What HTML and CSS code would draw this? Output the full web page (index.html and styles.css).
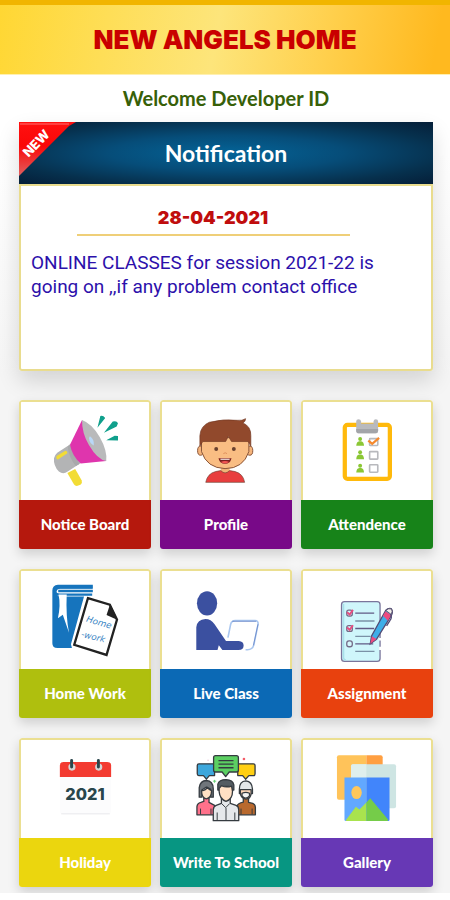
FILE: index.html
```html
<!DOCTYPE html>
<html lang="en">
<head>
    <meta charset="UTF-8">
    <meta name="viewport" content="width=device-width, initial-scale=1.0">
    <title>New Angels Home</title>
    <link rel="stylesheet" href="styles.css">
</head>
<body>
    <header class="app-header">
        <h1>NEW ANGELS HOME</h1>
    </header>

    <main class="content">
        <p class="welcome">Welcome Developer ID</p>

        <section class="notification">
            <div class="notification-header">
                <svg class="ribbon" viewBox="0 0 58 54" aria-hidden="true">
                    <defs>
                        <linearGradient id="ribbonRed" x1="0" y1="0" x2="0" y2="1">
                            <stop offset="0" stop-color="#ff1010"/>
                            <stop offset="0.45" stop-color="#fa0808"/>
                            <stop offset="1" stop-color="#e06060"/>
                        </linearGradient>
                    </defs>
                    <path d="M0 0H57L50 4L0 54Z" fill="url(#ribbonRed)"/>
                    <path d="M1 2H50" stroke="#ff7070"/>
                    <text x="17" y="26" transform="rotate(-46 17 21)" text-anchor="middle" class="ribbon-text">NEW</text>
                </svg>
                <h2>Notification</h2>
            </div>
            <div class="notification-body">
                <p class="date">28-04-2021</p>
                <p class="message">ONLINE CLASSES for session 2021-22 is going on ,,if any problem contact office</p>
            </div>
        </section>

        <nav class="menu">
            <a class="tile notice" href="#notice">
                <svg viewBox="28 18 392 296" aria-hidden="true">
                    <path d="M170 233L194 221L214 256Q217 264 210 269L199 273Q193 273 190 268Z" fill="#f2dc35"/>
                    <path d="M178 146L211 203L171 229Q157 239 144 229Q127 211 129 188Q131 178 139 171Z" fill="#b3b4b5"/>
                    <path d="M178 146L194 181L207 206L196 212Q175 187 171 152Z" fill="#a8a9ab"/>
                    <path d="M137 181L164 165Q170 164 170 173L141 192Q134 191 137 181Z" fill="#f2dc35"/>
                    <path d="M215 71L289 197L211 204Q185 183 178 147Z" fill="#df35ad"/>
                    <path d="M215 71Q245 82 269 123Q293 165 289 197Q262 193 236 148Q214 110 215 71Z" fill="#b9babb"/>
                    <path d="M239 121Q253 130 251 149Q238 143 236 126Z" fill="#b9d8f8"/>
                    <path d="M262 95L271 59Q279 56 286 65ZM282 110L309 76Q321 72 325 81L321 91ZM289 133L315 119L325 120L325 134Z" fill="#10a08c"/>
                </svg>
                <span class="label">Notice Board</span>
            </a>
            <a class="tile profile" href="#profile">
                <svg viewBox="15 18 392 296" aria-hidden="true">
                    <path d="M195 210H222V238H195Z" fill="#f1b478"/>
                    <path d="M149 262Q154 235 179 229L195 226Q208 240 222 226L239 229Q264 236 268 262Z" fill="#e83e3e" stroke="#704132" stroke-width="2"/>
                    <ellipse cx="133" cy="165" rx="9" ry="14" fill="#f5b47b" stroke="#875338" stroke-width="3"/>
                    <ellipse cx="284" cy="165" rx="9" ry="14" fill="#f5b47b" stroke="#875338" stroke-width="3"/>
                    <path d="M136 125H281V168Q264 220 208 220Q152 218 136 168Z" fill="#f9bd83" stroke="#875338" stroke-width="3"/>
                    <path d="M131 151V119Q133 89 160 78Q203 67 246 72Q260 74 271 67Q271 76 263 80Q288 91 287 119V151L279 137H228L218 121L210 137H140Z" fill="#91492c" stroke="#713722" stroke-width="2"/>
                    <circle cx="181" cy="160" r="6" fill="#69412f"/>
                    <circle cx="235" cy="160" r="6" fill="#69412f"/>
                    <path d="M203 174Q209 169 214 174" fill="none" stroke="#dc8e5c" stroke-width="3"/>
                    <path d="M188 188H228Q224 205 208 205Q192 205 188 188Z" fill="#7c2020"/>
                    <path d="M194 190H222V193H194Z" fill="#fff"/>
                    <path d="M195 200Q208 193 221 200Q208 208 195 200Z" fill="#f35553"/>
                </svg>
                <span class="label">Profile</span>
            </a>
            <a class="tile attendance" href="#attendance">
                <svg viewBox="19 18 392 296" aria-hidden="true">
                    <rect x="147" y="86" width="138" height="165" rx="8" fill="#fff" stroke="#ffb90b" stroke-width="13"/>
                    <path d="M182 75Q182 69 189 69Q196 69 197 75V82H235V75Q236 69 242 69Q249 69 249 75V103Q249 112 241 112H191Q182 112 182 103Z" fill="#b9babd"/>
                    <path d="M182 99H249V104Q248 112 241 112H191Q182 112 182 104Z" fill="#a3a5a9"/>
                    <g fill="#8bc735">
                        <circle cx="194" cy="129" r="6"/><path d="M182 150Q183 137 191 136H197Q205 137 206 150Z"/>
                        <circle cx="194" cy="170" r="6"/><path d="M182 191Q183 178 191 177H197Q205 178 206 191Z"/>
                        <circle cx="194" cy="211" r="6"/><path d="M182 232Q183 219 191 218H197Q205 219 206 232Z"/>
                    </g>
                    <g fill="none" stroke="#b8b9bd" stroke-width="5">
                        <rect x="223" y="128" width="25" height="21" rx="2"/>
                        <rect x="223" y="168" width="25" height="23" rx="2"/>
                        <rect x="223" y="208" width="25" height="23" rx="2"/>
                    </g>
                    <path d="M219 134L231 144L252 126" fill="none" stroke="#f5892c" stroke-width="7"/>
                </svg>
                <span class="label">Attendence</span>
            </a>
            <a class="tile homework" href="#homework">
                <svg viewBox="28 18 392 296" aria-hidden="true">
                    <path d="M248 58H141Q124 59 124 76V237Q124 252 140 252H184L181 240L221 94H145Q134 89 137 77Q139 70 148 70H248Z" fill="#1674bd"/>
                    <path d="M246 66H143Q133 67 132 77Q132 88 146 88H246" fill="none" stroke="#1674bd" stroke-width="7"/>
                    <path d="M142 77H248" stroke="#1674bd" stroke-width="8"/>
                    <path d="M143 88H168Q165 155 175 205L156 150L141 161Q150 120 143 88Z" fill="#fff"/>
                    <path d="M230 94L302 115L327 161L293 279L186 245Z" fill="#fff"/>
                    <path d="M233 99L300 119L322 165L290 273L191 242Z" fill="#fff" stroke="#222" stroke-width="7"/>
                    <path d="M301 117L290 151L324 166Z" fill="#222"/>
                    <text x="226" y="171" transform="rotate(16 226 171)" class="handwriting">Home</text>
                    <text x="211" y="217" transform="rotate(14 211 217)" class="handwriting">-work</text>
                </svg>
                <span class="label">Home Work</span>
            </a>
            <a class="tile live" href="#live">
                <svg viewBox="15 18 392 296" aria-hidden="true">
                    <ellipse cx="153" cy="115" rx="31" ry="37" fill="#3b50a0"/>
                    <path d="M120 258V188Q123 164 148 163Q165 163 176 179L211 230H250Q265 231 265 244Q265 258 249 258H200L189 243L185 258Z" fill="#3b50a0"/>
                    <path d="M217 220L225 180Q228 168 239 168H300Q311 168 309 180L296 243Q292 257 277 257H271" fill="none" stroke="#a9c6ef" stroke-width="5"/>
                    <path d="M230 170H303M309 179L295 244" fill="none" stroke="#5674bd" stroke-width="2"/>
                </svg>
                <span class="label">Live Class</span>
            </a>
            <a class="tile assignment" href="#assignment">
                <svg viewBox="19 18 392 296" aria-hidden="true">
                    <rect x="137" y="110" width="118" height="183" rx="9" fill="#cff6fb" stroke="#7a759b" stroke-width="4"/>
                    <path d="M143 117V282Q144 288 150 289" fill="none" stroke="#a8e0ea" stroke-width="5"/>
                    <path d="M179 145H237M179 192H237M179 239H234" stroke="#625b85" stroke-width="4"/>
                    <path d="M179 169H238M179 216H226M179 262H238" stroke="#7a91a6" stroke-width="4"/>
                    <g fill="#d4f7fb" stroke="#746b87" stroke-width="4">
                        <rect x="153" y="136" width="17" height="18" rx="6"/>
                        <rect x="153" y="183" width="17" height="18" rx="6"/>
                        <rect x="153" y="230" width="17" height="18" rx="7"/>
                    </g>
                    <path d="M154 142L162 149L172 135M154 189L162 196L172 182" fill="none" stroke="#e74d80" stroke-width="6"/>
                    <path d="M255 221V229M255 248V258" stroke="#fff" stroke-width="6"/>
                    <path d="M225 239L229 215L272 137Q280 128 289 131Q296 139 290 151L244 225Z" fill="#3eaee8" stroke="#514b75" stroke-width="4"/>
                    <path d="M264 153L272 139L289 151L279 168ZM225 239L230 216L244 224Z" fill="#ed4b80"/>
                    <path d="M273 137Q280 129 289 132Q295 138 289 149Z" fill="#f2f0ec" stroke="#655c76" stroke-width="3"/>
                    <path d="M287 148Q293 158 285 168L275 184" fill="none" stroke="#514b75" stroke-width="4"/>
                </svg>
                <span class="label">Assignment</span>
            </a>
            <a class="tile holiday" href="#holiday">
                <svg viewBox="28 18 392 296" aria-hidden="true">
                    <path d="M148 128H303V236Q303 244 295 244H156Q148 244 148 236Z" fill="#fcfcfd"/>
                    <path d="M151 242H300" stroke="#e9eaec" stroke-width="3"/>
                    <path d="M147 129V94Q147 83 158 83H292Q304 83 304 94V129Z" fill="#f33b31"/>
                    <circle cx="184" cy="99" r="11" fill="#d4d5d5"/>
                    <circle cx="266" cy="99" r="11" fill="#d4d5d5"/>
                    <path d="M183 79V99M265 79V99" stroke="#29464c" stroke-width="9" stroke-linecap="round"/>
                    <text x="224" y="199" text-anchor="middle" class="year">2021</text>
                </svg>
                <span class="label">Holiday</span>
            </a>
            <a class="tile write" href="#write">
                <svg viewBox="15 18 392 296" aria-hidden="true">
                    <g stroke="#353b40" stroke-width="4" stroke-linejoin="round">
                        <path d="M128 89H176V125H160L151 136L142 125H128Q123 124 123 119V94Q123 89 128 89Z" fill="#3da7dc"/>
                        <path d="M247 89H295Q300 89 300 94V119Q300 125 295 125H281L271 136L262 125H247Z" fill="#ffcf13"/>
                        <path d="M179 64H243Q249 64 249 70V108Q249 114 243 114H221L210 128L199 114H179Q173 114 173 108V70Q173 64 179 64Z" fill="#5bcf62"/>
                        <path d="M188 79H234M188 90H234M188 101H234" fill="none"/>
                        <path d="M143 190H159V207L176 216V245H122V220Q123 210 134 207L143 204Z" fill="#ff718b"/>
                        <path d="M129 191V162Q132 140 151 140Q171 141 172 165V191H164V166L151 160L137 169V191Z" fill="#70767b"/>
                        <path d="M136 172Q150 169 154 161Q160 170 167 171Q166 194 151 196Q137 194 136 172Z" fill="#ffe0c4"/>
                        <path d="M264 192H280V207L293 210Q301 213 301 222V245H246V216Q247 210 264 206Z" fill="#b9692e"/>
                        <path d="M252 166Q252 142 272 141Q291 143 292 166V180H252Z" fill="#e3e7e9"/>
                        <path d="M255 168H288V180Q286 196 272 197Q257 194 255 180Z" fill="#ffd9ba"/>
                        <path d="M260 179Q272 174 283 179V187Q271 201 260 187Z" fill="#f3f4f4"/>
                        <path d="M197 191H224V210L242 216Q250 219 250 230V263H172V229Q173 219 181 216L197 210Z" fill="#e5e8eb"/>
                        <path d="M186 169V151Q190 137 211 137Q232 138 235 153V169H227L220 158H197L193 169Z" fill="#545c62"/>
                        <path d="M190 164L197 156Q212 163 228 157L231 173Q231 198 211 204Q192 197 190 174Z" fill="#ffe0c4"/>
                        <path d="M198 211L210 223L222 211M211 224V262M184 238V262M238 238V262M133 226V244M165 226V244M257 226V244M291 226V244" fill="none" stroke-width="3"/>
                    </g>
                    <path d="M176 138V147M171 142H181" stroke="#69d177" stroke-width="3"/>
                    <circle cx="266" cy="74" r="4" fill="#f45c69"/>
                    <circle cx="156" cy="78" r="2" fill="#e9bed4"/>
                </svg>
                <span class="label">Write To School</span>
            </a>
            <a class="tile gallery" href="#gallery">
                <svg viewBox="19 18 392 296" aria-hidden="true">
                    <path d="M129 63H213V199H129Q123 199 123 193V69Q123 63 129 63Z" fill="#ffc35a"/>
                    <path d="M213 63H257Q263 63 263 69V120H213Z" fill="#ff9f41"/>
                    <path d="M172 90H298Q304 90 304 96V219Q304 225 298 225H166V96Q166 90 172 90Z" fill="#cee5e3"/>
                    <path d="M172 90H213V140H166V96Q166 90 172 90Z" fill="#dfefed"/>
                    <path d="M146 131H213V264H150Q146 264 146 260Z" fill="#62a8ff"/>
                    <path d="M213 131H284V260Q284 264 280 264H213Z" fill="#4185fb"/>
                    <ellipse cx="183" cy="177" rx="16" ry="20" fill="#ffc75b"/>
                    <path d="M150 262L181 220L192 229L213 207V264H152Z" fill="#a9e34e"/>
                    <path d="M213 207L225 194L280 260L278 264H213Z" fill="#75cc49"/>
                </svg>
                <span class="label">Gallery</span>
            </a>
        </nav>
    </main>
</body>
</html>
```

FILE: styles.css
```css
* {
    box-sizing: border-box;
}
body {
    margin: 0;
    background: #fff;
    font-family: Lato, sans-serif;
}
h1, h2, p {
    margin: 0;
}
.app-header {
    padding: 18px 0 17px;
    border-top: 5px solid #f1b500;
    border-bottom: 1px solid #fff0b0;
    background: linear-gradient(100deg, #ffd733 0%, #fde57b 48%, #ffd04d 72%, #ffb91f 96%);
    text-align: center;
}
.app-header h1 {
    color: #c90000;
    font-family: Inter, sans-serif;
    font-size: 26px;
    font-weight: 900;
    line-height: 34px;
}
.content {
    padding: 7px 17px 6px 19px;
    overflow: hidden;
    background: linear-gradient(#fff 80px, #f5f5f5 300px);
}
.welcome {
    color: #376008;
    font-size: 20px;
    font-weight: 700;
    line-height: 32px;
    text-align: center;
}
.notification {
    margin-top: 8px;
    border-radius: 2px;
    box-shadow: 0 10px 22px rgba(0, 0, 0, 0.14);
}
.notification-header {
    position: relative;
    padding: 15px 0;
    background: radial-gradient(ellipse at center, #046498 0%, #064d79 40%, #06304d 75%, #051e38 100%);
    text-align: center;
}
.notification-header h2 {
    color: #fff;
    font-size: 23px;
    font-weight: 700;
    line-height: 32px;
}
.ribbon {
    position: absolute;
    top: 0;
    left: 0;
    width: 58px;
    height: 54px;
}
.ribbon-text {
    fill: #fff;
    font-family: Inter, sans-serif;
    font-size: 13px;
    font-weight: 800;
}
.notification-body {
    min-height: 187px;
    padding: 20px 36px 20px 10px;
    border: 2px solid #e9dc8e;
    border-radius: 0 0 3px 3px;
    background: #fff;
}
.date {
    width: 75%;
    margin: 0 auto 15px;
    padding-bottom: 4px;
    border-bottom: 2px solid #efcf78;
    color: #c00d0d;
    font-family: Inter, sans-serif;
    font-size: 18px;
    font-weight: 900;
    line-height: 24px;
    text-align: center;
}
.message {
    color: #2c10ab;
    font-family: Roboto, sans-serif;
    font-size: 19px;
    line-height: 24px;
}
.menu {
    display: grid;
    grid-template-columns: repeat(3, 1fr);
    gap: 20px 9px;
    margin-top: 29px;
}
.tile {
    display: flex;
    flex-direction: column;
    overflow: hidden;
    border-radius: 3px;
    background: #fff;
    box-shadow: 0 5px 12px rgba(0, 0, 0, 0.16);
    text-decoration: none;
}
.tile svg {
    display: block;
    width: 100%;
    height: 100px;
    border: 2px solid #ebdf91;
    border-bottom: 0;
    border-radius: 3px 3px 0 0;
}
.label {
    padding: 12px 0 13px;
    color: #fff;
    font-size: 15px;
    font-weight: 900;
    line-height: 24px;
    text-align: center;
    white-space: nowrap;
}
.notice .label {
    background: #b5180d;
}
.profile .label {
    background: #780988;
}
.attendance .label {
    background: #178319;
}
.homework .label {
    background: #afbf0e;
}
.live .label {
    background: #0b69b5;
}
.assignment .label {
    background: #e8410e;
}
.holiday .label {
    background: #ebd60e;
}
.write .label {
    background: #079682;
}
.gallery .label {
    background: #6738b5;
}
.handwriting {
    fill: #3a85c4;
    font-family: "DejaVu Sans", sans-serif;
    font-size: 27px;
    font-style: italic;
}
.year {
    fill: #29464c;
    font-family: Inter, sans-serif;
    font-size: 50px;
    font-weight: 800;
}
```
